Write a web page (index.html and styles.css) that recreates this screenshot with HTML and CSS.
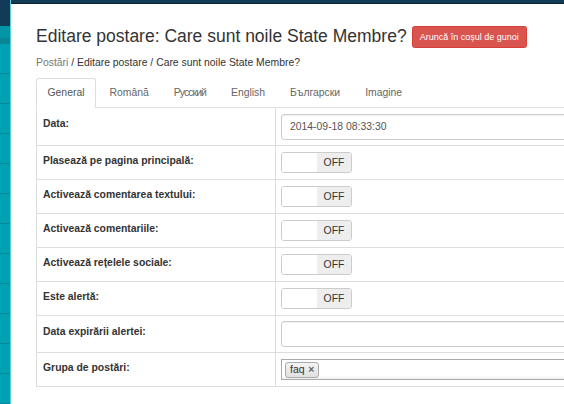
FILE: index.html
```html
<!DOCTYPE html>
<html lang="ro">
<head>
<meta charset="utf-8">
<title>Editare postare</title>
<link rel="stylesheet" href="styles.css">
</head>
<body>
<div class="app">
  <aside class="sidebar">
    <div class="sb-head"></div>
    <div class="sb-sub"></div>
    <div class="sb-dark"></div>
    <div class="sb-item"></div>
    <div class="sb-item"></div>
    <div class="sb-item"></div>
    <div class="sb-item"></div>
    <div class="sb-item"></div>
    <div class="sb-item"></div>
    <div class="sb-item"></div>
    <div class="sb-item"></div>
    <div class="sb-item"></div>
    <div class="sb-item"></div>
    <div class="sb-item"></div>
    <div class="sb-item"></div>
  </aside>
  <main class="main">
    <div class="topbar"></div>
    <div class="content">
      <div class="title-row">
        <h3 class="title">Editare postare: Care sunt noile State Membre?</h3>
        <button class="btn-danger">Aruncă în coșul de gunoi</button>
      </div>
      <div class="breadcrumb"><a class="crumb-link">Postări</a> / Editare postare / Care sunt noile State Membre?</div>
      <ul class="tabs">
        <li class="tab active">General</li>
        <li class="tab">Română</li>
        <li class="tab tab-narrow">Русский</li>
        <li class="tab">English</li>
        <li class="tab">Български</li>
        <li class="tab">Imagine</li>
      </ul>
      <table class="form-table">
        <tr class="row-input row-first">
          <th>Data:</th>
          <td><div class="input">2014-09-18 08:33:30</div></td>
        </tr>
        <tr>
          <th>Plasează pe pagina principală:</th>
          <td><div class="switch"><span class="sw-label"></span><span class="sw-off">OFF</span></div></td>
        </tr>
        <tr>
          <th>Activează comentarea textului:</th>
          <td><div class="switch"><span class="sw-label"></span><span class="sw-off">OFF</span></div></td>
        </tr>
        <tr>
          <th>Activează comentariile:</th>
          <td><div class="switch"><span class="sw-label"></span><span class="sw-off">OFF</span></div></td>
        </tr>
        <tr>
          <th>Activează rețelele sociale:</th>
          <td><div class="switch"><span class="sw-label"></span><span class="sw-off">OFF</span></div></td>
        </tr>
        <tr>
          <th>Este alertă:</th>
          <td><div class="switch"><span class="sw-label"></span><span class="sw-off">OFF</span></div></td>
        </tr>
        <tr class="row-input">
          <th>Data expirării alertei:</th>
          <td><div class="input"></div></td>
        </tr>
        <tr>
          <th>Grupa de postări:</th>
          <td><div class="choices"><span class="choice">faq <span class="choice-x">×</span></span></div></td>
        </tr>
      </table>
    </div>
  </main>
</div>
</body>
</html>
```
FILE: styles.css
```css
html, body {
  margin: 0;
  padding: 0;
  width: 564px;
  height: 404px;
  overflow: hidden;
  background: #fff;
}
body {
  font-family: "Liberation Sans", Arial, sans-serif;
  font-size: 10.4px;
  line-height: 15px;
  color: #333;
}
.app {
  display: flex;
  height: 404px;
}
.sidebar {
  width: 10px;
  flex: 0 0 10px;
  background: #00a1b3;
  border-right: 1px solid #5fd0dc;
  display: flex;
  flex-direction: column;
}
.sb-head { height: 37px; background: #123b57; }
.sb-sub { height: 18px; background: #0096a6; }
.sb-dark { height: 8px; background: #0a8595; }
.sb-item { height: 29px; border-bottom: 1px solid #07899a; flex: 0 0 auto; }
.main {
  flex: 1;
  min-width: 0;
  overflow: hidden;
}
.topbar {
  height: 3px;
  background: #123b57;
  border-bottom: 1px solid #0a2233;
}
.content {
  padding: 0 0 0 25px;
  width: 760px;
}
.title-row {
  display: flex;
  align-items: flex-start;
  margin-top: 22px;
  height: 22px;
}
.title {
  margin: 0;
  font-size: 17.5px;
  font-weight: normal;
  line-height: 20px;
  color: #333;
  white-space: nowrap;
}
.btn-danger {
  margin-left: 5px;
  height: 22px;
  padding: 0 7px;
  background: #d9534f;
  border: 1px solid #d43f3a;
  border-radius: 2.5px;
  color: #fff;
  font-family: "Liberation Sans", Arial, sans-serif;
  font-size: 9px;
  line-height: 20px;
  white-space: nowrap;
}
.breadcrumb {
  margin-top: 7px;
  line-height: 15px;
  color: #333;
  white-space: nowrap;
}
.crumb-link { color: #777; }
.tabs {
  list-style: none;
  margin: 8px 0 0;
  padding: 0;
  display: flex;
  border-bottom: 1px solid #ddd;
}
.tab {
  margin-right: 2px;
  margin-bottom: -1px;
  padding: 6px 10.5px 7px;
  line-height: 15px;
  color: #666;
  border: 1px solid transparent;
  border-radius: 3px 3px 0 0;
}
.tab-narrow { letter-spacing: -0.9px; }
.tab.active {
  color: #555;
  background: #fff;
  border-color: #ddd #ddd transparent;
}
.form-table {
  border-collapse: collapse;
  width: 735px;
  border: 1px solid #ddd;
  border-top: 0;
}
.form-table th,
.form-table td {
  border: 1px solid #ddd;
  padding: 6px 5px;
  vertical-align: top;
  text-align: left;
}
.form-table tr:first-child th,
.form-table tr:first-child td { border-top: 0; }
.form-table th {
  width: 226px;
  padding: 7px 6px 6px 6px;
  font-weight: bold;
  line-height: 15px;
  color: #333;
}
.input {
  height: 24px;
  border: 1px solid #ccc;
  border-radius: 3px;
  padding: 0 8px;
  line-height: 24px;
  color: #555;
  box-shadow: inset 0 1px 1px rgba(0,0,0,0.06);
}
.row-input td { padding-top: 5px; padding-bottom: 5px; }
.row-input th { padding-top: 8px; }
.row-first td { padding-top: 6px; }
.switch {
  display: flex;
  width: 69px;
  height: 19px;
  border: 1px solid #ccc;
  border-radius: 3px;
  overflow: hidden;
}
.sw-label {
  width: 35px;
  background: #fff;
}
.sw-off {
  flex: 1;
  background: #eee;
  color: #333;
  text-align: center;
  line-height: 19px;
  font-size: 10.4px;
}
.choices {
  height: 19px;
  border: 1px solid #aaa;
  padding: 0 3px;
  display: flex;
  align-items: center;
  background: linear-gradient(#fff 85%, #eee);
}
.choice {
  display: inline-block;
  height: 14px;
  line-height: 14px;
  padding: 0 4px;
  border: 1px solid #aaa;
  border-radius: 3px;
  background: linear-gradient(#f4f4f4, #e0e0e0);
  color: #333;
  font-size: 10.4px;
}
.choice-x {
  color: #666;
  font-weight: bold;
  margin-left: 1px;
}
```
